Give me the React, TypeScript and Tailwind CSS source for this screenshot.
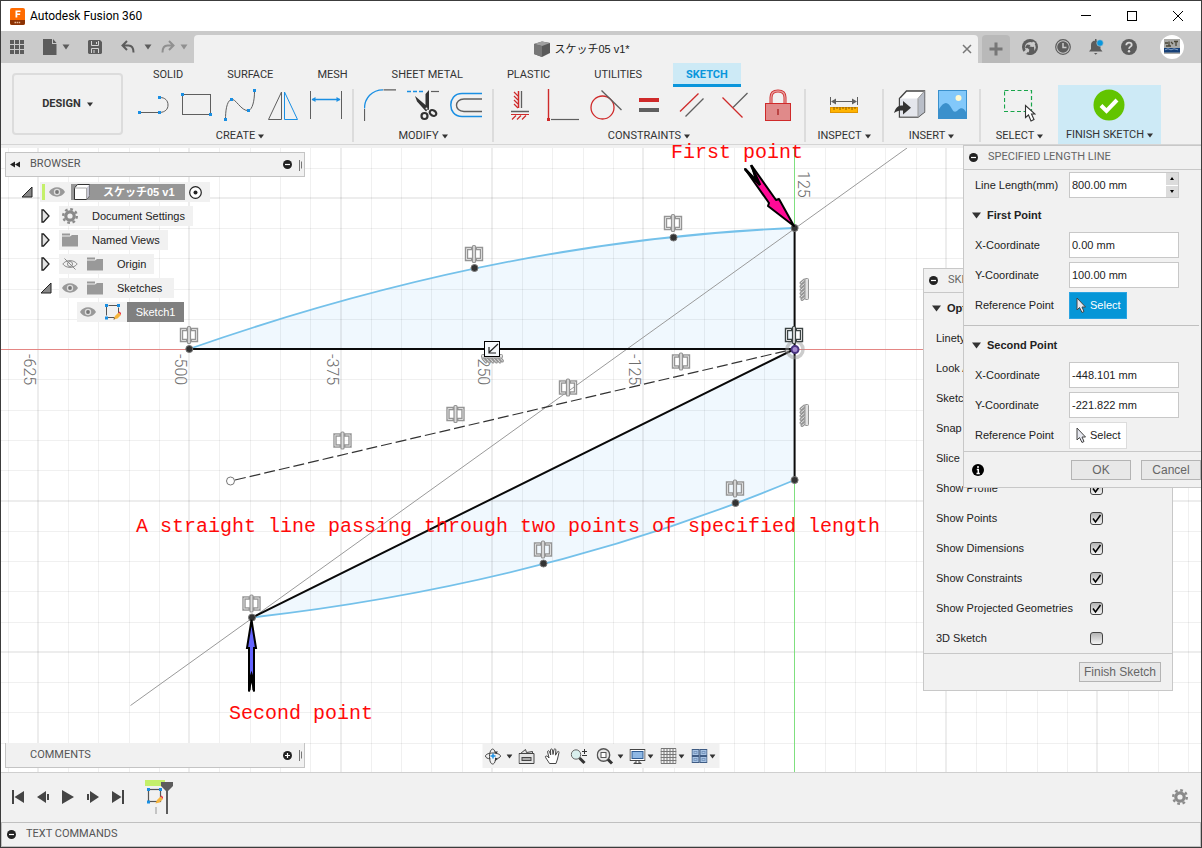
import React from "react";
import type { ReactNode } from "react";

const ui = "font-['Liberation_Sans','Noto_Sans_CJK_JP',sans-serif]";
const caps = "font-['Roboto','Liberation_Sans',sans-serif]";

function Svg({ w, h, children, className = "" }: { w: number; h: number; children: ReactNode; className?: string }) {
  return (
    <svg width={w} height={h} viewBox={`0 0 ${w} ${h}`} fill="none" className={`block shrink-0 ${className}`} aria-hidden="true">
      {children}
    </svg>
  );
}

function Caret({ color = "#333" }: { color?: string }) {
  return (
    <Svg w={6} h={5}>
      <path d="M0 .5h6L3 4.500z" fill={color} />
    </Svg>
  );
}

function BigCaret({ color }: { color: string }) {
  return (
    <Svg w={8} h={6}>
      <path d="M.5 .5h7L4 5.500z" fill={color} />
    </Svg>
  );
}

/* ---------- window chrome ---------- */

function TitleBar() {
  return (
    <header className="flex h-[30px] shrink-0 items-center bg-white pl-[9px]">
      <Svg w={15} h={17}>
        <rect x="0" y="0" width="15" height="17" rx="2" fill="#ff6b00" />
        <path d="M0 12h15v3a2 2 0 0 1-2 2H2a2 2 0 0 1-2-2z" fill="#8b3204" />
        <path d="M5.500 9.500v-7h5v1.600h-3.200v1.400h2.800v1.500h-2.800v2.500z" fill="#fff" />
        <path d="M4.500 14.500h6" stroke="#e8b896" strokeWidth="1.500" strokeDasharray="1.500 .6" />
      </Svg>
      <h1 className="ml-[5px] font-['Roboto','Noto_Sans',sans-serif] text-xs text-black">Autodesk Fusion 360</h1>
      <div className="ml-auto flex">
        <button aria-label="Minimize" className="flex h-[30px] w-[46px] items-center justify-center">
          <Svg w={10} h={10}><path d="M0 4.500h10" stroke="#000" /></Svg>
        </button>
        <button aria-label="Maximize" className="flex h-[30px] w-[46px] items-center justify-center">
          <Svg w={10} h={10}><rect x=".5" y=".5" width="9" height="9" stroke="#000" /></Svg>
        </button>
        <button aria-label="Close" className="flex h-[30px] w-[46px] items-center justify-center">
          <Svg w={10} h={10}><path d="M0 0l10 10M10 0L0 10" stroke="#000" /></Svg>
        </button>
      </div>
    </header>
  );
}

function QuickBar() {
  return (
    <div className="flex h-8 shrink-0 items-center bg-[#cacaca]">
      <div className="flex w-[193px] shrink-0 items-center pl-[9px]">
        <button aria-label="Show data panel">
          <Svg w={14} h={14}>
            {[0, 5, 10].map((y) => [0, 5, 10].map((x) => <rect key={`${x}-${y}`} x={x} y={y} width="4" height="4" fill="#5c5c5c" />))}
          </Svg>
        </button>
        <button aria-label="File" className="ml-[19px] flex items-center gap-[5px]">
          <Svg w={14} h={16}><path d="M0 0h9v5h4.500v11H0zM10 0l3.500 4H10z" fill="#5c5c5c" /></Svg>
          <BigCaret color="#5c5c5c" />
        </button>
        <button aria-label="Save" className="ml-[18px]">
          <Svg w={14} h={14}>
            <path d="M1 0h11l2 2v11l-1 1H1l-1-1V1z" fill="#5c5c5c" />
            <path d="M3.500 1v4.500h7V1M3.500 13V8.500h7V13" stroke="#d5d5d5" />
            <path d="M8.500 2v2M6 10v3" stroke="#d5d5d5" />
          </Svg>
        </button>
        <button aria-label="Undo" className="ml-[19px] flex items-center gap-[9px]">
          <Svg w={14} h={14}><path d="M6 1L1.500 5.500 6 10M2 5.500h5.500c3.500 0 5 2 5 7" stroke="#5c5c5c" strokeWidth="2" /></Svg>
          <BigCaret color="#5c5c5c" />
        </button>
        <button aria-label="Redo" className="ml-[9px] flex items-center gap-[5px]">
          <Svg w={14} h={14}><path d="M8 1l4.500 4.500L8 10M12 5.500H6.500c-3.500 0-5 2-5 7" stroke="#909090" strokeWidth="2" /></Svg>
          <BigCaret color="#909090" />
        </button>
      </div>
      <div className="mt-1 flex h-7 min-w-0 flex-1 items-center rounded-t bg-[#f1f1f1]">
        <div className="flex flex-1 items-center justify-center gap-1 pl-2">
          <Svg w={16} h={16}>
            <path d="M0 3L8 .5 16 2v10l-8 4-8-3z" fill="#5a5a5a" />
            <path d="M0 3L8 .5 16 2 8 5z" fill="#a0a0a0" />
            <path d="M0 3l8 2v11l-8-3z" fill="#777" />
          </Svg>
          <span className={`${ui} text-[11px] text-[#222]`}>スケッチ05 v1*</span>
        </div>
        <button aria-label="Close tab" className="mr-1.5">
          <Svg w={10} h={10}><path d="M1 1l8 8M9 1L1 9" stroke="#777" strokeWidth="1.500" /></Svg>
        </button>
      </div>
      <button aria-label="New tab" className="mt-1 ml-1 flex h-7 w-7 items-center justify-center rounded-t bg-[#b9b9b9]">
        <Svg w={14} h={14}><path d="M7 .5v13M.5 7h13" stroke="#777" strokeWidth="3" /></Svg>
      </button>
      <div className="ml-3 flex items-center gap-[17px]">
        <button aria-label="Extensions">
          <Svg w={16} h={16}>
            <circle cx="8" cy="8" r="8" fill="#5c5c5c" />
            <circle cx="8.300" cy="8.300" r="5.400" fill="#cacaca" />
            <path d="M3 8.500L5 5.500 8.500 6l3.500 2 .5 4.500-2.500 3-3.500.5.500-4.500-2-2z" fill="#5c5c5c" />
            <path d="M7.500 7.500l3.500-5 2.500 1.500-2.500 4z" fill="#cacaca" />
            <path d="M1 13.500L5.500 9l2 2-3.500 4z" fill="#cacaca" />
          </Svg>
        </button>
        <button aria-label="Job status">
          <Svg w={16} h={16}>
            <circle cx="8" cy="8" r="7.300" stroke="#5c5c5c" strokeWidth="1.200" />
            <circle cx="8" cy="8" r="5.800" fill="#5c5c5c" />
            <path d="M8 4v4.500h3.500" stroke="#cacaca" strokeWidth="1.500" />
          </Svg>
        </button>
        <button aria-label="Notifications">
          <Svg w={16} h={16}>
            <path d="M1 12.500l2-2.500V6c0-3 2-4.500 4.500-4.500S12.500 3 12.500 6v4l2 2.500zM6 14h3.500l-1.800 1.800zM7 0h1.500v2H7z" fill="#5c5c5c" />
            <circle cx="12" cy="4" r="3.300" fill="#0a96dc" stroke="#cacaca" strokeWidth=".6" />
          </Svg>
        </button>
        <button aria-label="Help">
          <Svg w={16} h={16}>
            <circle cx="8" cy="8" r="8" fill="#5c5c5c" />
            <path d="M5.300 6.200C5.300 4.500 6.500 3.600 8 3.600s2.700.9 2.700 2.300C10.700 7.600 8 7.700 8 9.800" stroke="#dadada" strokeWidth="1.800" />
            <circle cx="8" cy="12.200" r="1.200" fill="#dadada" />
          </Svg>
        </button>
      </div>
      <button aria-label="Account" className="mr-[17px] ml-[23px]">
        <Svg w={24} h={24}>
          <circle cx="12" cy="12" r="12" fill="#fff" />
          <rect x="4" y="4" width="16" height="15" fill="#a9a9a6" />
          <path d="M5 8h3M9 6.500v4M11 7l2 2M14 6.500h4M16 7v4M6 11h5" stroke="#4a4636" strokeWidth="1.300" />
          <rect x="4" y="13" width="16" height="4.500" fill="#164078" />
          <path d="M5 14.800l3-1 3 1 3-1 4 1" stroke="#9db8d8" strokeWidth=".8" />
        </Svg>
      </button>
    </div>
  );
}

/* ---------- ribbon ---------- */

const B = "#1a8fe3";
const G = "#5f5f5f";
const R = "#cf2a2a";

function Dot({ x, y }: { x: number; y: number }) {
  return <rect x={x - 1.5} y={y - 1.5} width="3" height="3" fill={B} />;
}

const createIcons: [string, ReactNode][] = [
  ["Line", <><path d="M2 23.500h20c5-.5 8-3 8-7.500s-3-7.500-8-7.500" stroke={G} /><Dot x={1.5} y={23.5} /><Dot x={21.5} y={23.5} /><Dot x={21.5} y={8.5} /></>],
  ["Rectangle", <><rect x="1.500" y="5.500" width="28" height="20" stroke={G} /><Dot x={1.5} y={5.5} /><Dot x={29.5} y={25.5} /></>],
  ["Spline", <><path d="M1.500 30.500c0-8 1-18 5.500-20s10 12 17.500 11c4-1 6-10 6-19" stroke={G} /><Dot x={1.5} y={30.5} /><Dot x={7.5} y={10.5} /><Dot x={24.5} y={21.5} /><Dot x={30.5} y={1.5} /></>],
  ["Mirror", <><path d="M14.500 3v27.500h-13z" stroke={G} /><path d="M17.500 3v27.500h13z" stroke={B} /></>],
  ["Sketch dimension", <><path d="M.500 2v28M31.500 2v28" stroke={G} /><path d="M2 10.500h28" stroke={B} strokeWidth="1.500" /><path d="M1.500 10.500l4-2.500v5zM30.500 10.500l-4-2.500v5z" fill={B} /></>],
];

const modifyIcons: [string, ReactNode][] = [
  ["Fillet", <><path d="M.500 19.500C.500 9 8 .8 19 .8" stroke={B} strokeWidth="1.300" /><path d="M19.500 .8h12.500M.500 20v12" stroke={G} strokeWidth="1.200" /></>],
  ["Trim", <><path d="M0 2.500h18" stroke={B} strokeWidth="1.300" strokeDasharray="4 2" /><path d="M24 2.500h8" stroke={G} strokeWidth="1.200" /><path d="M22 1v20l-3.500-1.500V5zM8 7l14 12-3 3.500-9-10z" fill="#333" /><circle cx="17.500" cy="27" r="3" stroke="#333" strokeWidth="2.200" /><ellipse cx="26" cy="24" rx="3.500" ry="2.600" transform="rotate(30 26 24)" stroke="#333" strokeWidth="2.200" /><circle cx="19.500" cy="19.500" r="1" fill="#eee" /></>],
  ["Offset", <><path d="M32 4.500H12C4 4.500.800 10.500.800 16S4 27.500 12 27.500h20" stroke={B} strokeWidth="1.500" /><path d="M32 10h-18c-5 0-7.500 3-7.500 6.200s2.500 6.300 7.500 6.300h18" stroke={G} strokeWidth="1.400" /></>],
];

const constraintIcons: [string, ReactNode][] = [
  ["Horizontal/Vertical", <><path d="M14.500 2v17" stroke={R} strokeWidth="1.500" /><path d="M17.500 2v17M7 22.500h18" stroke={G} strokeWidth="1.300" /><path d="M14 7l-4-4M14 11l-4-4M14 15l-4-4M14 19l-4-4M7 25.500h18M8 30.500l4-4M13 30.500l4-4M18 30.500l4-4" stroke={R} strokeWidth="1.200" /></>],
  ["Coincident", <><path d="M1.500 0v30" stroke={R} strokeWidth="1.400" /><path d="M4 30.500h28" stroke={G} strokeWidth="1.200" /><rect x="0" y="29" width="3" height="3" fill={R} /></>],
  ["Tangent", <><circle cx="12.500" cy="18.500" r="11.500" stroke={R} strokeWidth="1.300" /><path d="M11.500 1.500l20 19.500" stroke={G} strokeWidth="1.300" /></>],
  ["Equal", <><rect x="6" y="9" width="20" height="4" fill={R} /><rect x="6" y="19" width="20" height="4" fill={G} /></>],
  ["Parallel", <><path d="M4 22.500L22.500 4.500" stroke={R} strokeWidth="1.300" /><path d="M9.500 27.500L27.500 9.500" stroke={G} strokeWidth="1.300" /></>],
  ["Midpoint", <><path d="M3.500 8.500l20 20" stroke={R} strokeWidth="1.300" /><path d="M14 18.500L28.500 4" stroke={G} strokeWidth="1.300" /></>],
  ["Fix/Unfix", <><path d="M9 14V8.500C9 4 11.500 2 16 2s7 2 7 6.500V14" stroke={R} strokeWidth="3" /><path d="M9 14V8.500C9 4 11.500 2 16 2s7 2 7 6.500V14" stroke="#e69a9a" strokeWidth="1.400" /><rect x="3.500" y="14.500" width="25" height="17" fill="#e08a8a" stroke={R} /><path d="M16 20v6" stroke="#a82020" strokeWidth="1.300" /></>],
];

const inspectIcons: [string, ReactNode][] = [
  ["Measure", <><path d="M2.500 8v8M29.500 8v8" stroke={G} /><path d="M4 12.500h24" stroke={G} /><path d="M3 12.500l5-3v6zM29 12.500l-5-3v6z" fill={G} /><rect x="2.500" y="18.500" width="27" height="5" fill="#ffb400" stroke="#e09400" /><path d="M6 18v3M9 18v2M12 18v3M15 18v2M18 18v3M21 18v2M24 18v3M27 18v2" stroke="#8a5c00" /></>],
];

const insertIcons: [string, ReactNode][] = [
  ["Insert derive", <><path d="M5.500 9.500l7-7.500h18v21l-6.500 5H5.500z" fill="#fff" stroke="#444" strokeWidth="1.400" /><path d="M24 9.500v18.500l6.500-5V2z" fill="#b9bec8" /><path d="M6 9.500h18v18H6z" fill="#e4e6ec" /><path d="M24 9.500L30.500 2M24 9.500v18" stroke="#999" /><path d="M0 24c2-6 4-7.500 9-7.500V12l8 6.800-8 6.700v-4c-4 0-6 .5-9 2.500z" fill="#333" /></>],
  ["Insert image", <><rect x="1.500" y="1.500" width="28" height="28" fill="#82c8fa" stroke="#3a90cc" /><path d="M2 20c5-8 9-8 13 0 2 4 4 3 6 1 3-3 6-2 8 2v6.500H2z" fill="#3a90cc" /><circle cx="21.500" cy="9" r="3" fill="#fff9d0" /></>],
];

const selectIcons: [string, ReactNode][] = [
  ["Select window", <><rect x=".500" y="1.500" width="27" height="21" stroke="#18a54a" strokeWidth="1.200" strokeDasharray="4 2.500" /><path d="M21.500 16.500v12l3-2.500 2.500 6 3-1.500-2.500-5.500h3.500z" fill="#fff" stroke="#333" strokeWidth="1.100" /></>],
];

function Group({ label, icons, width = "", last = false }: { label: string; icons: [string, ReactNode][]; width?: string; last?: boolean }) {
  return (
    <section className={`mt-0.5 flex h-[53px] shrink-0 flex-col items-center justify-between px-2.5 ${width} ${last ? "" : "border-r-2 border-[#dcdcdc]"}`}>
      <div className="flex gap-[11px]">
        {icons.map(([name, art]) => (
          <button key={name} aria-label={name} title={name}>
            <Svg w={32} h={33}>{art}</Svg>
          </button>
        ))}
      </div>
      <button className={`${caps} flex items-center gap-[3px] text-[11px] leading-3 whitespace-nowrap text-[#333]`}>
        {label}
        <Caret />
      </button>
    </section>
  );
}

function Ribbon() {
  const tabs = ["SOLID", "SURFACE", "MESH", "SHEET METAL", "PLASTIC", "UTILITIES"];
  return (
    <div className="flex h-[82px] shrink-0 overflow-hidden border-b border-[#d5d5d5] bg-[#f1f1f1]">
      <button className={`${caps} mt-2.5 mr-[5px] ml-[11px] flex h-[62px] w-[111px] shrink-0 items-center justify-center gap-1.5 rounded border-2 border-[#dcdcdc] text-[11px] font-bold text-[#333]`}>
        DESIGN
        <Caret />
      </button>
      <div className="flex min-w-0 flex-1 flex-col">
        <nav className={`${caps} ml-3 flex h-6 gap-[18px] text-[11px] text-[#333]`}>
          {tabs.map((t) => (
            <button key={t} className="px-[13px] whitespace-nowrap">{t}</button>
          ))}
          <button className="border-b-[3px] border-[#0a96dc] bg-[#cdeaf6] px-[13px] pt-[3px] font-bold text-[#0a96dc]">SKETCH</button>
        </nav>
        <div className="flex h-[57px]">
          <Group label="CREATE" icons={createIcons} />
          <Group label="MODIFY" icons={modifyIcons} />
          <Group label="CONSTRAINTS" icons={constraintIcons} />
          <Group label="INSPECT" icons={inspectIcons} width="w-[78px]" />
          <Group label="INSERT" icons={insertIcons} />
          <Group label="SELECT" icons={selectIcons} width="w-[77px]" last />
          <div className="-mt-0.5 flex w-[103px] shrink-0 flex-col items-center bg-[#cdeaf6] pt-1">
            <button className={`${caps} flex flex-col items-center gap-2 text-[11px] leading-3 text-[#333]`}>
              <Svg w={32} h={32}>
                <circle cx="16" cy="16" r="15.500" fill="#62c400" />
                <path d="M8 16.500l5.500 5.500L24 11" stroke="#fff" strokeWidth="4" />
              </Svg>
              <span className="flex items-center gap-[3px] whitespace-nowrap">FINISH SKETCH <Caret /></span>
            </button>
          </div>
        </div>
      </div>
    </div>
  );
}

/* ---------- sketch canvas ---------- */

function Symmetric({ x, y, dark = false }: { x: number; y: number; dark?: boolean }) {
  const bracket = "M-3 -5.500h-4.500v11h4.500M3 -5.500h4.500v11H3";
  const tone = dark ? "#3c4444" : "#959595";
  return (
    <g transform={`translate(${x} ${y})`}>
      <path d={bracket} stroke={tone} strokeWidth="3.400" strokeLinecap="square" />
      <path d={bracket} stroke="#dcdcdc" strokeWidth="1" />
      <rect x="-1.500" y="-8.500" width="3" height="17" rx="1" fill="#dcdcdc" stroke={tone} strokeWidth="1.200" />
    </g>
  );
}

function Hatch({ x, y, turn = 0 }: { x: number; y: number; turn?: number }) {
  const marks = "M.500 -9l-3.500 3M.500 -5.500l-3.500 3M.500 -2l-3.500 3M.500 1.500l-3.500 3M.500 5l-3.500 3M.500 8.500l-2.500 2";
  return (
    <g transform={`translate(${x} ${y}) rotate(${turn})`}>
      <path d={marks} stroke="#959595" strokeWidth="3" strokeLinecap="round" />
      <path d={marks} stroke="#e2e2e2" strokeWidth="1" strokeLinecap="round" />
      <rect x="1" y="-10.500" width="3.500" height="21" rx="1" fill="#e2e2e2" stroke="#959595" />
    </g>
  );
}

function Sketch() {
  const step = 30.27;
  const ox = 794.6;
  const oy = 349.2;
  const cols = Array.from({ length: 75 }, (_, i) => i - 26).filter((i) => i !== 0);
  const rows = Array.from({ length: 50 }, (_, i) => i - 6).filter((i) => i !== 0);
  const labels: [string, number, number][] = [["-625", 24, 354], ["-500", 175, 354], ["-375", 327, 354], ["-250", 478, 354], ["-125", 629, 354], ["125", 798, 171]];
  const nodes = [[189.3, 349], [474.5, 268], [673.5, 237.5], [794.6, 228], [794.6, 480], [735.5, 503], [543.5, 563.5], [252, 617.5]];
  return (
    <svg className="absolute inset-0 h-full w-full" fill="none" role="img" aria-label="Sketch canvas">
      <g transform="translate(-1 -145)">
        <path d="M189 349C389 279 594 236 794.600 228V349z" fill="#f0f8fe" />
        <path d="M252 617.500C432 597 615 555 794.600 480V349z" fill="#f0f8fe" />
        {cols.map((i) => (
          <rect key={`c${i}`} x={Math.round(ox + i * step) - (i % 5 ? 0 : 1)} y="148" width={i % 5 ? 1 : 2} height="1400" fill="#000" fillOpacity={i % 5 ? 0.06 : 0.07} />
        ))}
        {rows.map((i) => (
          <rect key={`r${i}`} x="0" y={Math.round(oy + i * step) - (i % 5 ? 0 : 1)} width="3000" height={i % 5 ? 1 : 2} fill="#000" fillOpacity={i % 5 ? 0.06 : 0.07} />
        ))}
        <rect x="0" y="349" width="3000" height="1" fill="#e48684" />
        <rect x="794" y="148" width="1" height="1400" fill="#7fe07f" />
        <g fill="#6e6e6e" fontFamily="Roboto, 'Liberation Sans', sans-serif" fontSize="16" fontWeight="300">
          {labels.map(([t, x, y]) => (
            <text key={t} transform={`translate(${x} ${y}) rotate(90)`}>{t}</text>
          ))}
        </g>
        <path d="M130.500 705.500L907 148" stroke="#9a9a9a" />
        <path d="M235 480L794 349" stroke="#333" strokeWidth="1.200" strokeDasharray="11 4" />
        <circle cx="230.500" cy="481" r="4" fill="#fff" stroke="#777" />
        <path d="M189 349C389 279 594 236 794.600 228" stroke="#74c1ea" strokeWidth="1.800" />
        <path d="M252 617.500C432 597 615 555 794.600 480" stroke="#74c1ea" strokeWidth="1.800" />
        <path d="M189 349h605.600M252 617.500L794.600 349M794.600 228v252" stroke="#0a0a0a" strokeWidth="2" />
        <circle cx="795" cy="349.500" r="8" stroke="#999" strokeOpacity=".5" strokeWidth="3.500" />
        {nodes.map(([x, y]) => (
          <circle key={`${x}-${y}`} cx={x} cy={y} r="3.500" fill="#333" stroke="#777" strokeWidth="1" />
        ))}
        <circle cx="795" cy="349.500" r="3.500" fill="#a58bd0" stroke="#4a3480" strokeWidth="2" />
        <Symmetric x={673} y={223} />
        <Symmetric x={474} y={254} />
        <Symmetric x={189} y={335} />
        <Symmetric x={681} y={361.500} />
        <Symmetric x={568} y={387.500} />
        <Symmetric x={455.5} y={414} />
        <Symmetric x={342.5} y={440.500} />
        <Symmetric x={543} y={549.500} />
        <Symmetric x={735} y={488.500} />
        <Symmetric x={251.5} y={603.500} />
        <Symmetric x={794} y={335} dark />
        <Hatch x={804} y={289} />
        <Hatch x={804} y={415} />
        <Hatch x={492} y={359} turn={-90} />
        <rect x="484.500" y="341.500" width="15" height="15" fill="#f5f9fc" stroke="#000" />
        <path d="M498 344l-8.500 8M489 347v6h7" stroke="#222" strokeWidth="1.200" />
        <path d="M794 226L779 199l-3 1-24-34 4 15-11-12 24 34-1 3z" fill="#ff0a96" stroke="#000" strokeWidth="2" strokeLinejoin="round" />
        <path d="M745 169l15 16-9-20" stroke="#000" strokeWidth="2.600" />
        <path d="M251.500 620L247 648h2v43.500l2.500-15 2.500 15V648h2z" fill="#6464ff" stroke="#000" strokeWidth="2" />
        <path d="M249.500 690v-10l2-6 2 6v10" stroke="#000" strokeWidth="2" />
      </g>
      <rect x="0" y="0" width="100%" height="3" fill="#f1f1f1" />
    </svg>
  );
}

function Annotations() {
  return (
    <svg className="pointer-events-none absolute inset-0 h-full w-full overflow-visible">
      <g transform="translate(-1 -145)" fill="#ff0a0a" fontFamily="'Liberation Mono', monospace" fontSize="20">
        <text x="671" y="158">First point</text>
        <text x="136" y="532">A straight line passing through two points of specified length</text>
        <text x="229" y="719">Second point</text>
      </g>
    </svg>
  );
}

/* ---------- browser tree ---------- */

function Eye({ off = false }: { off?: boolean }) {
  return (
    <Svg w={16} h={16}>
      {off ? (
        <>
          <path d="M.8 8C4 3.500 12 3.500 15.200 8 12 12.500 4 12.500.8 8z" stroke="#8a8a8a" />
          <circle cx="8" cy="8" r="2.500" stroke="#8a8a8a" />
          <path d="M2.500 2.500l11 11" stroke="#8a8a8a" />
        </>
      ) : (
        <>
          <path d="M0 8C3.500 1.800 12.500 1.800 16 8 12.500 14.200 3.500 14.200 0 8z" fill="#999" />
          <circle cx="8" cy="8" r="3.200" fill="#ddd" />
          <circle cx="8" cy="8" r="1.900" fill="#777" />
        </>
      )}
    </Svg>
  );
}

function Folder() {
  return (
    <Svg w={16} h={14}>
      <path d="M0 .5h8v2H0zM0 3.500h8l2-1.500h6v11.500H0z" fill="#999" />
    </Svg>
  );
}

function SketchIcon() {
  return (
    <Svg w={16} h={16}>
      <rect x="1.500" y="1.500" width="12" height="12" stroke="#555" strokeDasharray="9 3" strokeDashoffset="-2" />
      <Dot x={1.5} y={1.5} />
      <Dot x={13.5} y={1.5} />
      <Dot x={1.5} y={14} />
      <path d="M8.500 15.500l1.500-3.500 3.500-3.500 2.500 2.500L12.500 14.500z" fill="#f7b53c" />
      <path d="M13.500 8.500l1-1 1.500 1.500v2z" fill="#ee3344" />
      <path d="M8.500 15.500l.5-1.500 1.200 1z" fill="#444" />
    </Svg>
  );
}

function Twisty({ open = false }: { open?: boolean }) {
  return (
    <button aria-label={open ? "Collapse" : "Expand"} aria-expanded={open} className="w-[13px] shrink-0">
      {open ? (
        <Svg w={12} h={12}><path d="M11 1v10H1z" fill="#888" stroke="#222" /></Svg>
      ) : (
        <Svg w={12} h={14}><path d="M2 1h1.500L9 7l-5.500 6H2z" fill="#e4e4e4" stroke="#222" strokeWidth="1.300" /></Svg>
      )}
    </button>
  );
}

function Gear() {
  return (
    <Svg w={16} h={16}>
      <circle cx="8" cy="8" r="4.200" stroke="#8a8a8a" strokeWidth="3.200" />
      <circle cx="8" cy="8" r="6.800" stroke="#8a8a8a" strokeWidth="2.400" strokeDasharray="2.700 2.640" />
    </Svg>
  );
}

function CircleSign({ plus = false }: { plus?: boolean }) {
  return (
    <Svg w={9} h={9}>
      <circle cx="4.500" cy="4.500" r="4.500" fill="#222" />
      <path d={plus ? "M2 4.500h5M4.500 2v5" : "M2 4.500h5"} stroke="#fff" strokeWidth="1.200" />
    </Svg>
  );
}

function Grip() {
  return (
    <Svg w={4} h={12}>
      <path d="M.500 1v11M2.500 2.500v7" stroke="#777" />
    </Svg>
  );
}

function BrowserPanel() {
  const row = "flex h-6 items-center";
  return (
    <aside className={`${ui} absolute top-[7px] left-1 w-[300px] text-[11px] text-[#222]`}>
      <div className={`${caps} flex h-[25px] items-center border border-[#c4c4c4] bg-[#f1f1f1] pr-px pl-1 text-[#555]`}>
        <button aria-label="Dock browser">
          <Svg w={10} h={7}><path d="M5 .5v6L0 3.500zM10 .5v6L5 3.500z" fill="#222" /></Svg>
        </button>
        <h2 className="ml-2.5 flex-1">BROWSER</h2>
        <button aria-label="Minimize browser" className="mr-[7px]"><CircleSign /></button>
        <Grip />
      </div>
      <ul className="mt-[3px]">
        <li className={`${row} pl-4`}>
          <Twisty open />
          <div className="ml-1.5 flex h-5 items-center bg-[#f1f1f1] pr-2">
            <span className="ml-0.5 h-4 w-[3px] bg-[#c4f06a]" />
            <button aria-label="Toggle visibility" className="ml-1 shrink-0"><Eye /></button>
            <div className="ml-1.5 flex h-4 w-[114px] items-center bg-[#969696] text-white">
              <Svg w={20} h={18}>
                <path d="M3.500 5l3-3.500h12v11l-3 4h-12z" fill="#fff" stroke="#333" />
                <path d="M15.500 5v11.500l3-4v-11z" fill="#c8c8d4" />
                <path d="M3.500 5h12v11" stroke="#aaa" />
              </Svg>
              <span className="ml-3 font-bold whitespace-nowrap">スケッチ05 v1</span>
            </div>
            <Svg w={13} h={13} className="ml-1">
              <circle cx="6.500" cy="6.500" r="5.800" fill="#fff" stroke="#222" strokeWidth="1.200" />
              <circle cx="6.500" cy="6.500" r="2" fill="#222" />
            </Svg>
          </div>
        </li>
        <li className={`${row} pl-[35px]`}>
          <Twisty />
          <div className="ml-1.5 flex h-5 items-center bg-[#f1f1f1] pr-2 pl-[3px]"><Gear /><span className="ml-3.5">Document Settings</span></div>
        </li>
        <li className={`${row} pl-[35px]`}>
          <Twisty />
          <div className="ml-1.5 flex h-5 items-center bg-[#f1f1f1] pr-2 pl-[3px]"><Folder /><span className="ml-3.5">Named Views</span></div>
        </li>
        <li className={`${row} pl-[35px]`}>
          <Twisty />
          <div className="ml-1.5 flex h-5 items-center bg-[#f1f1f1] pr-2 pl-[3px]">
            <button aria-label="Toggle visibility"><Eye off /></button>
            <span className="ml-[9px]"><Folder /></span>
            <span className="ml-3.5">Origin</span>
          </div>
        </li>
        <li className={`${row} pl-[35px]`}>
          <Twisty open />
          <div className="ml-1.5 flex h-5 items-center bg-[#f1f1f1] pr-3 pl-[3px]">
            <button aria-label="Toggle visibility"><Eye /></button>
            <span className="ml-[9px]"><Folder /></span>
            <span className="ml-3.5">Sketches</span>
          </div>
        </li>
        <li className={`${row} pl-[72px]`}>
          <div className="flex h-5 items-center bg-[#f1f1f1] pl-[3px]">
            <button aria-label="Toggle visibility"><Eye /></button>
            <span className="ml-[9px]"><SketchIcon /></span>
            <span className="ml-1.5 flex h-5 w-[57px] items-center justify-center bg-[#808080] text-white">Sketch1</span>
          </div>
        </li>
      </ul>
    </aside>
  );
}

/* ---------- dialogs ---------- */

function Section({ title }: { title: string }) {
  return (
    <button aria-expanded="true" className="flex h-[30px] w-full items-center gap-1.5 px-2 font-bold text-[#222]">
      <Svg w={9} h={7}><path d="M0 .5h9L4.500 6.500z" fill="#333" /></Svg>
      {title}
    </button>
  );
}

function Field({ id, label, value, spin = false }: { id: string; label: string; value: string; spin?: boolean }) {
  return (
    <div className="flex h-[30px] items-center pl-[11px]">
      <label htmlFor={id} className="w-[94px] shrink-0">{label}</label>
      <div className="flex h-[26px] w-[110px] border border-[#c8c8c8] bg-white">
        <input id={id} defaultValue={value} className="min-w-0 flex-1 bg-transparent px-0.5 outline-none" />
        {spin && (
          <div className="flex w-3 flex-col bg-[#dcdcdc]">
            <button aria-label="Increase" className="flex flex-1 items-center justify-center border-b border-white"><Svg w={4} h={3}><path d="M0 3h4L2 0z" fill="#000" /></Svg></button>
            <button aria-label="Decrease" className="flex flex-1 items-center justify-center"><Svg w={4} h={3}><path d="M0 0h4L2 3z" fill="#000" /></Svg></button>
          </div>
        )}
      </div>
    </div>
  );
}

function Reference({ active = false }: { active?: boolean }) {
  return (
    <div className="flex h-[30px] items-center pl-[11px]">
      <span className="w-[94px] shrink-0">Reference Point</span>
      <button className={`flex h-[27px] w-[58px] items-center gap-1 border pl-1.5 ${active ? "border-[#2aa4e2] bg-[#0696d7] text-white" : "border-[#dcdcdc] bg-white text-[#222]"}`}>
        <Svg w={10} h={16}>
          <path d="M1 1v12l2.500-2.500L6 15.500l2-1-2-4.500h3.500z" fill="#e6e8f0" stroke="#444" />
        </Svg>
        Select
      </button>
    </div>
  );
}

function PushButton({ children, className = "" }: { children: ReactNode; className?: string }) {
  return <button className={`h-5 border border-[#b4b4b4] bg-[#e8e8e8] text-xs leading-[18px] text-[#666] ${className}`}>{children}</button>;
}

function LengthDialog() {
  return (
    <section className={`${ui} absolute top-0 right-0 w-[238px] overflow-hidden border border-r-0 border-[#c8c8c8] bg-[#f1f1f1] text-[11px] text-[#222]`}>
      <h2 className={`${caps} flex h-[23px] items-center gap-2.5 pl-[5px] text-[#666]`}><CircleSign />SPECIFIED LENGTH LINE</h2>
      <div className="border-t border-[#c8c8c8]">
        <Field id="len" label="Line Length(mm)" value="800.00 mm" spin />
        <Section title="First Point" />
        <Field id="x1" label="X-Coordinate" value="0.00 mm" />
        <Field id="y1" label="Y-Coordinate" value="100.00 mm" />
        <Reference active />
        <hr className="mt-[5px] mr-0.5 mb-1 border-[#c0c0c0]" />
        <Section title="Second Point" />
        <Field id="x2" label="X-Coordinate" value="-448.101 mm" />
        <Field id="y2" label="Y-Coordinate" value="-221.822 mm" />
        <Reference />
      </div>
      <div className="mt-px flex h-9 items-center border-t border-[#c8c8c8] pl-2">
        <Svg w={12} h={12}>
          <circle cx="6" cy="6" r="6" fill="#000" />
          <path d="M6 2v2M4.800 5.500H6.300V9.500M4.500 9.500h3.300" stroke="#fff" strokeWidth="1.500" />
        </Svg>
        <PushButton className="ml-auto w-[60px]">OK</PushButton>
        <PushButton className="ml-2.5 w-[60px]">Cancel</PushButton>
      </div>
    </section>
  );
}

function Tick({ label, on = true }: { label: string; on?: boolean }) {
  return (
    <label className="flex h-[30px] items-center pl-3">
      <span className="w-[154px] shrink-0 whitespace-nowrap">{label}</span>
      <span className="relative">
        <input type="checkbox" defaultChecked={on} className="peer block h-[13px] w-[13px] appearance-none rounded-[3px] border border-[#444] bg-linear-to-b from-[#b4b4b4] to-[#f4f4f4]" />
        <svg width="13" height="13" viewBox="0 0 13 13" fill="none" className="pointer-events-none absolute inset-0 hidden peer-checked:block" aria-hidden="true">
          <path d="M3 6.500l2.500 3.500L10.500 3" stroke="#000" strokeWidth="1.500" />
        </svg>
      </span>
    </label>
  );
}

function SketchPalette() {
  return (
    <section className={`${ui} absolute top-[123px] right-7 w-[250px] border border-[#c8c8c8] bg-[#f1f1f1] text-[11px] text-[#222]`}>
      <h2 className={`${caps} flex h-[23px] items-center gap-2.5 pl-[5px] text-[#666]`}><CircleSign />SKETCH PALETTE</h2>
      <div className="border-y border-[#c8c8c8]">
        <Section title="Options" />
        <div className="flex h-[30px] items-center pl-3">Linetype</div>
        <div className="flex h-[30px] items-center pl-3">Look At</div>
        <Tick label="Sketch Grid" />
        <Tick label="Snap" />
        <Tick label="Slice" on={false} />
        <Tick label="Show Profile" />
        <Tick label="Show Points" />
        <Tick label="Show Dimensions" />
        <Tick label="Show Constraints" />
        <Tick label="Show Projected Geometries" />
        <Tick label="3D Sketch" on={false} />
      </div>
      <div className="flex h-9 items-center justify-end pr-[11px]">
        <PushButton className="w-[82px]">Finish Sketch</PushButton>
      </div>
    </section>
  );
}

/* ---------- bottom bars ---------- */

function NavBar() {
  const b = "flex items-center gap-0.5";
  return (
    <div className="absolute bottom-1 left-1/2 flex h-6 w-[237px] -translate-x-1/2 items-center bg-[#f1f1f1] pl-0.5">
      <button aria-label="Orbit" className="flex items-center gap-1">
        <Svg w={18} h={17}>
          <path d="M11 10.700C14 10.500 16 9.500 16 8s-3.500-3-7.500-3S1 6.300 1 8s2 2.700 5 2.900" stroke="#444" />
          <path d="M10.700 5C10.300 2.500 9.300 1 8 1S5 4 5 8.500 6.300 16 8 16s2.500-1.500 2.800-4" stroke="#444" />
          <path d="M6 8h5M8.500 5.500v5" stroke="#1a8fe3" strokeWidth="1.500" />
          <path d="M10 3.500h3.500L11.500 6zM10.500 9.500l3 1.500-3 2z" fill="#333" />
        </Svg>
        <Caret />
      </button>
      <button aria-label="Look at" className="ml-1.5">
        <Svg w={17} h={17}>
          <path d="M.500 5.500h15v10h-15zM2 5.500l5-4 1 3 6-1v2" stroke="#444" fill="#e4e4e4" />
          <rect x="3.500" y="9.500" width="9" height="3" fill="#aaa" stroke="#444" />
        </Svg>
      </button>
      <button aria-label="Pan" className="ml-[9px]">
        <Svg w={17} h={17}>
          <path d="M5 15.500C3 12 1 10 .8 8.500 2 7.500 3 8 4.500 10L3 3.500c.5-1 1.600-1 2 .2L6.200 7 6 1.800c.4-1.200 1.800-1 2 0L8.500 6.500l1-5c.6-1 1.800-.7 1.900.4L11 7.200l2-3.500c.8-.7 1.700-.2 1.500.8L13 11l-1.500 4.500z" fill="#fff" stroke="#444" />
        </Svg>
      </button>
      <button aria-label="Zoom" className="ml-[9px]">
        <Svg w={17} h={17}>
          <circle cx="5.500" cy="6.500" r="4.700" fill="#d9efee" stroke="#666" />
          <path d="M9 10l5 5" stroke="#333" strokeWidth="3" />
          <path d="M11.500 3.500h5M14 1v5M11.500 7.500h5" stroke="#333" />
        </Svg>
      </button>
      <button aria-label="Fit" className="ml-[9px] flex items-center gap-[3px]">
        <Svg w={18} h={17}>
          <circle cx="7" cy="7" r="6.200" fill="#e8e8e8" stroke="#555" strokeWidth="1.400" />
          <rect x="4.500" y="4.500" width="5" height="5" fill="#fff" stroke="#555" />
          <path d="M11.500 11.500l4 4" stroke="#333" strokeWidth="3" />
        </Svg>
        <Caret />
      </button>
      <button aria-label="Display settings" className={`ml-1.5 ${b}`}>
        <Svg w={16} h={16}>
          <rect x=".500" y="1.500" width="15" height="11" fill="#fff" stroke="#444" />
          <rect x="2.500" y="3.500" width="11" height="7" fill="#8fb8e4" stroke="#2f5c94" />
          <path d="M6.500 13v2h-2M9.500 13v2h2M4 15.500h8" stroke="#444" />
        </Svg>
        <Caret />
      </button>
      <button aria-label="Grid and snaps" className={`ml-[7px] ${b}`}>
        <Svg w={16} h={16}>
          <path d="M.500 .500h15v15h-15zM3.500 0v16M6.500 0v16M9.500 0v16M12.500 0v16M0 3.500h16M0 6.500h16M0 9.500h16M0 12.500h16" stroke="#777" />
        </Svg>
        <Caret />
      </button>
      <button aria-label="Viewports" className={`ml-[7px] ${b}`}>
        <Svg w={16} h={14}>
          {[[0.5, 0.5], [8.5, 0.5], [0.5, 7.5], [8.5, 7.5]].map(([x, y]) => (
            <g key={`${x}-${y}`}>
              <rect x={x} y={y} width="7" height="6" fill="#a9c4e4" stroke="#3f5c84" />
              <rect x={x + 2} y={y + 2} width="3" height="2" stroke="#6f8fb8" strokeWidth=".8" />
            </g>
          ))}
        </Svg>
        <Caret />
      </button>
    </div>
  );
}

const playback: [string, string][] = [
  ["Go to start", "M0 0h2v14H0zM12 1v12L2.500 7z"],
  ["Step back", "M0 7l9-6v12zM10 4h2v6h-2z"],
  ["Play", "M0 0l12 7-12 7z"],
  ["Step forward", "M12 7L3 1v12zM0 4h2v6H0z"],
  ["Go to end", "M12 0h-2v14h2zM0 1v12L9.500 7z"],
];

function Timeline() {
  return (
    <footer className="shrink-0">
      <div className="flex h-[50px] items-center border-t border-[#cfcfcf] bg-[#f1f1f1] pr-[13px] pb-px pl-[11px]">
        <div className="flex gap-[13px]">
          {playback.map(([name, d]) => (
            <button key={name} aria-label={name}><Svg w={12} h={14}><path d={d} fill="#444" /></Svg></button>
          ))}
        </div>
        <button aria-label="Sketch feature" className="ml-5">
          <Svg w={30} h={36}>
            <rect x="1" y="1" width="20" height="6" fill="#c4f06a" />
            <g transform="translate(3 9)">
              <rect x="1.500" y="1.500" width="12" height="12" stroke="#555" strokeWidth="1.200" />
              <Dot x={1.5} y={1.5} /><Dot x={13.5} y={1.5} /><Dot x={1.5} y={14} />
              <path d="M8.500 15.500l1.500-3.500 3.500-3.500 2.500 2.500L12.500 14.500z" fill="#f7b53c" />
              <path d="M13.500 8.500l1-1 1.500 1.500v2z" fill="#ee3344" />
            </g>
            <path d="M12 28v7" stroke="#c4c4c4" strokeWidth="2" />
            <path d="M17 3h12v4l-5 5v23h-2V12l-5-5z" fill="#5c5c5c" />
          </Svg>
        </button>
        <button aria-label="Timeline settings" className="ml-auto"><Gear /></button>
      </div>
      <div className={`${caps} flex h-[25px] items-center gap-2.5 border border-[#c0c0c0] bg-[#f1f1f1] pl-[5px] text-[11px] text-[#555]`}>
        <CircleSign />
        TEXT COMMANDS
      </div>
    </footer>
  );
}

export default function App() {
  return (
    <div className="flex h-screen min-h-[640px] flex-col overflow-hidden border border-[#3c3c3c] bg-white">
      <TitleBar />
      <QuickBar />
      <Ribbon />
      <main className="relative min-h-0 flex-1 bg-white">
        <Sketch />
        <Annotations />
        <BrowserPanel />
        <SketchPalette />
        <LengthDialog />
        <div className={`${caps} absolute bottom-1 left-1 flex h-[25px] w-[300px] items-center border border-t-0 border-[#c4c4c4] bg-[#f1f1f1] pr-px pl-6 text-[11px] text-[#555]`}>
          <h2 className="flex-1">COMMENTS</h2>
          <button aria-label="Expand comments" className="mr-[7px]"><CircleSign plus /></button>
          <Grip />
        </div>
        <NavBar />
      </main>
      <Timeline />
    </div>
  );
}
